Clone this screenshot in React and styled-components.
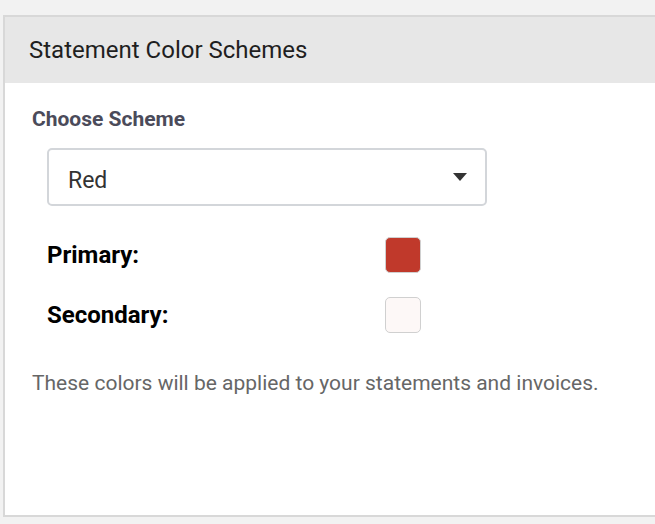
import React, { useState } from 'react'
import styled, { createGlobalStyle } from 'styled-components'

const GlobalStyle = createGlobalStyle`
body{
  margin: 0;
  background: #f2f2f2;
  font-family: Roboto, "Liberation Sans", sans-serif;
  overflow: hidden;
}
`

const schemes = {
  Red: { primary: "#c0392b", secondary: "#fdf8f7" },
  Blue: { primary: "#2b6cc0", secondary: "#f5f8fd" },
  Green: { primary: "#2e8b4a", secondary: "#f5fbf7" },
}

const App = () => {
  const [scheme, setScheme] = useState("Red")
  const colors = schemes[scheme]

  return (
    <>
      <GlobalStyle />
      <Page>
        <Card>
          <Header>Statement Color Schemes</Header>
          <Body>
            <Label>Choose Scheme</Label>
            <SelectWrap>
              <Select value={scheme} onChange={(e) => setScheme(e.target.value)}>
                {Object.keys(schemes).map((name) => (
                  <option key={name} value={name}>{name}</option>
                ))}
              </Select>
              <Caret width="14" height="8" viewBox="0 0 14 8">
                <path d="M0 0 L14 0 L7 8 Z" fill="#333" />
              </Caret>
            </SelectWrap>
            <ColorList>
              <ColorRow>
                <ColorName>Primary:</ColorName>
                <Swatch color={colors.primary} />
              </ColorRow>
              <ColorRow>
                <ColorName>Secondary:</ColorName>
                <Swatch color={colors.secondary} />
              </ColorRow>
            </ColorList>
            <Note>These colors will be applied to your statements and invoices.</Note>
          </Body>
        </Card>
      </Page>
    </>
  )
}

export default App

const Page = styled.div`
padding: 15px 0 0 3px;
height: 524px;
box-sizing: border-box;
`

const Card = styled.div`
width: 680px;
height: 498px;
border: 2px solid #d8d8d8;
background: #fff;
`

const Header = styled.div`
background: #e7e7e7;
height: 66px;
display: flex;
align-items: center;
padding-left: 24px;
font-size: 24px;
color: #1f1f1f;
`

const Body = styled.div`
padding: 24px 0 0 27px;
`

const Label = styled.div`
font-size: 21px;
font-weight: bold;
color: #4b4b5a;
line-height: 24px;
`

const SelectWrap = styled.div`
position: relative;
width: 440px;
margin: 17px 0 0 15px;
`

const Select = styled.select`
appearance: none;
width: 100%;
height: 58px;
box-sizing: border-box;
border: 2px solid #d3d6da;
border-radius: 5px;
background: #fff;
padding: 6px 0 0 19px;
font-family: Roboto, "Liberation Sans", sans-serif;
font-size: 23px;
color: #333;
outline: none;
`

const Caret = styled.svg`
position: absolute;
right: 20px;
top: 25px;
pointer-events: none;
`

const ColorList = styled.div`
display: flex;
flex-direction: column;
gap: 24px;
margin: 31px 0 0 15px;
`

const ColorRow = styled.div`
display: grid;
grid-template-columns: 338px 36px;
align-items: center;
height: 36px;
`

const ColorName = styled.div`
font-size: 24px;
font-weight: bold;
color: #000;
`

const Swatch = styled.div`
width: 36px;
height: 36px;
box-sizing: border-box;
border-radius: 5px;
border: 1px solid #d0d0d0;
background: ${(p) => p.color};
`

const Note = styled.div`
margin-top: 38px;
font-size: 21px;
color: #666;
`
